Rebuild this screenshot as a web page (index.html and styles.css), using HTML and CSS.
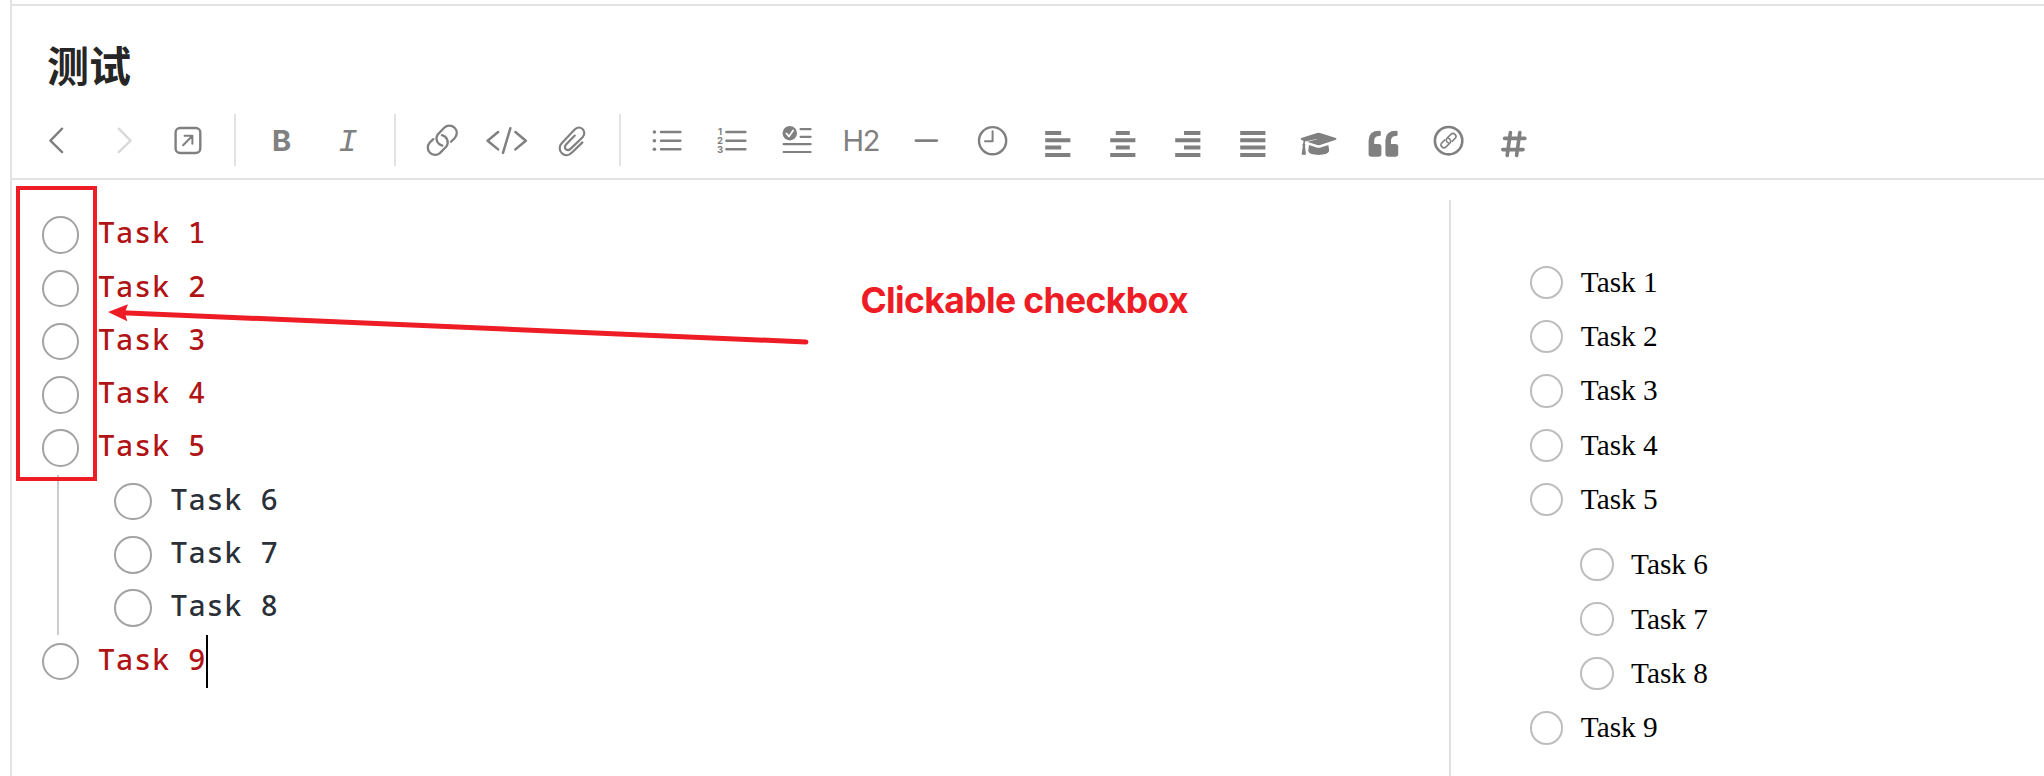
FILE: index.html
```html
<!DOCTYPE html>
<html lang="zh">
<head>
<meta charset="utf-8">
<title>测试</title>
<link rel="stylesheet" href="styles.css">
</head>
<body>
<main class="window">
  <header class="head">
    <h1 class="title">测试</h1>
    <nav class="toolbar">
      <svg class="tool" viewBox="-32.6 -26 65.2 52"><path d="M4.5-11.3-7.2.7 4.5 12.2"/></svg>
      <svg class="tool faint" viewBox="-32.6 -26 65.2 52"><path d="M-3.8-11.3 8 .7-3.8 12.2"/></svg>
      <svg class="tool" viewBox="-32.6 -26 65.2 52"><rect x="-12" y="-12" width="24.7" height="25" rx="4.5"/><path d="M-4.5 5.2 4.6-4M-3-4.3H4.8V3.7" stroke-width="2"/></svg>
      <span class="sep"></span>
      <svg class="tool text" viewBox="-32.6 -26 65.2 52"><text x="-9.6" y="11" class="bold">B</text></svg>
      <svg class="tool text" viewBox="-32.6 -26 65.2 52"><text x="-9.4" y="11" class="italic">I</text></svg>
      <span class="sep"></span>
      <svg class="tool" viewBox="-32.6 -26 65.2 52"><g stroke-width="2.3"><path d="M-8.3-.9-12 2.8A7.3 7.3 0 0 0-1.7 13.1L5 6.2A7.3 7.3 0 0 0 .3-4.8"/><path d="M9.4 1.8 13-1.8A7.3 7.3 0 0 0 2.6-12.2L-4-5.4A7.3 7.3 0 0 0 .8 5.6"/></g></svg>
      <svg class="tool" viewBox="-32.6 -26 65.2 52"><path stroke-width="2.5" d="M-8.5-8-19 .7-8.5 9.4M8.8-8 19.2.7 8.8 9.4M3.8-11.8-3.6 12.8"/></svg>
      <svg class="tool" viewBox="-32.6 -26 65.2 52"><path stroke-width="2.2" d="M10.8 2.4.7 12.3C-2.5 15.6-6.8 16-9.7 13.2S-12.7 6-9.7 2.9L3.1-10.4C5.5-12.9 8.7-13 10.9-11S13.5-5.4 11-2.8L-.8 8.6C-2.4 10.2-4.4 10.4-5.8 9.1S-6.9 6-5.3 4.3L3.2-4.4"/></svg>
      <span class="sep"></span>
      <svg class="tool" viewBox="-32.6 -26 65.2 52"><path stroke-width="2.4" d="M-5.6-8H13.8M-5.6.7H13.8M-5.6 9.3H13.8"/><g class="fill"><circle cx="-12.2" cy="-8" r="1.8"/><circle cx="-12.2" cy=".7" r="1.8"/><circle cx="-12.2" cy="9.3" r="1.8"/></g></svg>
      <svg class="tool text" viewBox="-32.6 -26 65.2 52"><path class="line" d="M-5.2-8H13.8M-5.2.7H13.8M-5.2 9.3H13.8"/><g class="nums"><text x="-11.6" y="-5">1</text><text x="-11.6" y="3.9">2</text><text x="-11.6" y="12.7">3</text></g></svg>
      <svg class="tool" viewBox="-32.6 -26 65.2 52"><circle class="fill" cx="-6.8" cy="-6.8" r="7.2"/><path stroke="#fff" stroke-width="1.8" d="M-10.2-6.5-7.6-3.6-3.5-9.6"/><path stroke-width="2.2" d="M4-10.8H14M4-3.2H14M-13 4.2H14M-13 12H14"/></svg>
      <svg class="tool text" viewBox="-32.6 -26 65.2 52"><text x="-19.2" y="11" class="heading" textLength="38">H2</text></svg>
      <svg class="tool" viewBox="-32.6 -26 65.2 52"><path stroke-width="2.8" d="M-10.6.6H10.2"/></svg>
      <svg class="tool" viewBox="-32.6 -26 65.2 52"><circle cx="0" cy=".7" r="13.6"/><path d="M0-8.8V1.2H-7.6" stroke-width="2"/></svg>
      <svg class="tool bars" viewBox="-32.6 -26 65.2 52"><path d="M-12.4-7H3.6M-12.4 .2H12.8M-12.4 7.6H3.6M-12.4 15H12.8"/></svg>
      <svg class="tool bars" viewBox="-32.6 -26 65.2 52"><path d="M-6.8-7H7.2M-12.4 .2H12.8M-6.8 7.6H7.2M-12.4 15H12.8"/></svg>
      <svg class="tool bars" viewBox="-32.6 -26 65.2 52"><path d="M-3.6-7H12.8M-12.4 .2H12.8M-3.6 7.6H12.8M-12.4 15H12.8"/></svg>
      <svg class="tool bars" viewBox="-32.6 -26 65.2 52"><path d="M-12.4-7H12.8M-12.4 .2H12.8M-12.4 7.6H12.8M-12.4 15H12.8"/></svg>
      <svg class="tool" viewBox="-32.6 -26 65.2 52"><g class="fill"><path d="M-17.3-2-1.5-7Q0-7.4 1.5-7L17.3-2Q18.8-1 17.3-.2L1.5 5Q0 5.5-1.5 5L-11.5 1.8-3-.3-.5-1.2-13.5 1.5Q-13.8 2.5-13.8 3.6-12.6 4.6-13.6 6L-12.6 14.7H-17L-15.8 6Q-16.8 4.8-15.5 3.5L-15 1-17.3-.2Q-18.8-1-17.3-2Z"/><path d="M-9.6 5-2 7.5Q0 8 2 7.5L9.8 5 10.6 11Q9 14.8 0 14.9-9.3 14.8-10.4 11Z"/></g></svg>
      <svg class="tool" viewBox="-32.6 -26 65.2 52"><g class="fill"><path id="quote" d="M-2.8-8V-5.2Q-2.8-4-4.2-4-9.4-4-9.4 .8V4H-5Q-2.2 4-2.2 6.8V14Q-2.2 16.8-5 16.8H-12.2Q-15 16.8-15 14V.8Q-15-9.2-4.4-9.2-2.8-9.2-2.8-8Z"/><use href="#quote" x="16.8"/></g></svg>
      <svg class="tool" viewBox="-32.6 -26 65.2 52"><circle cx="0" cy=".7" r="13.7" stroke-width="2.6"/><g transform="translate(-.3 .4) scale(.52)" stroke-width="3"><path d="M-6.6-1-12.2 4.4A5.6 5.6 0 0 0-4.2 12.4L3 5.2A5.6 5.6 0 0 0 .3-4"/><path d="M7.4 1.8 13-3.6A5.6 5.6 0 0 0 5-11.6L-2.4-4.4A5.6 5.6 0 0 0 .6 4.8"/></g></svg>
      <svg class="tool" viewBox="-32.6 -26 65.2 52"><path stroke-width="3.6" d="M-3.2-7.4-6.4 15.4M6.2-7.4 3 15.4M-9-1.6H11.3M-10.8 9.6H9.5"/></svg>
    </nav>
  </header>
  <div class="panes">
    <section class="editor">
      <ul class="source">
        <li class="row"><i class="box"></i><span class="code">Task 1</span></li>
        <li class="row"><i class="box"></i><span class="code">Task 2</span></li>
        <li class="row"><i class="box"></i><span class="code">Task 3</span></li>
        <li class="row"><i class="box"></i><span class="code">Task 4</span></li>
        <li class="row"><i class="box"></i><span class="code">Task 5</span></li>
        <li>
          <ul class="nested">
            <li class="row"><i class="box"></i><span class="code">Task 6</span></li>
            <li class="row"><i class="box"></i><span class="code">Task 7</span></li>
            <li class="row"><i class="box"></i><span class="code">Task 8</span></li>
          </ul>
        </li>
        <li class="row"><i class="box"></i><span class="code">Task 9</span><span class="caret"></span></li>
      </ul>
    </section>
    <section class="preview">
      <ul class="tasks">
        <li class="task"><i class="check"></i>Task 1</li>
        <li class="task"><i class="check"></i>Task 2</li>
        <li class="task"><i class="check"></i>Task 3</li>
        <li class="task"><i class="check"></i>Task 4</li>
        <li class="task"><i class="check"></i>Task 5</li>
        <li>
          <ul class="subtasks">
            <li class="task"><i class="check"></i>Task 6</li>
            <li class="task"><i class="check"></i>Task 7</li>
            <li class="task"><i class="check"></i>Task 8</li>
          </ul>
        </li>
        <li class="task"><i class="check"></i>Task 9</li>
      </ul>
    </section>
  </div>
</main>
<svg class="annotation" viewBox="0 0 2044 776">
  <rect x="18" y="188" width="77" height="291"/>
  <path class="shaft" d="M122 312.7 806 342"/>
  <path class="tip" d="M108 312 128 304.2 124.8 312.8 127.3 321.2Z"/>
  <text x="860.5" y="313" textLength="328">Clickable checkbox</text>
</svg>
</body>
</html>
```
FILE: styles.css
```css
* { box-sizing: border-box; }
body { margin: 0; background: #fff; overflow: hidden; }
ul { list-style: none; margin: 0; padding: 0; }

.window {
  height: 776px;
  margin-left: 10px;
  padding-top: 4px;
  border-left: 2px solid #e3e3e3;
  display: flex;
  flex-direction: column;
}
.head {
  height: 176px;
  flex: none;
  border-top: 2px solid #e3e3e3;
  border-bottom: 2px solid #e3e3e3;
}
.title {
  margin: 0;
  padding: 28px 0 0 35px;
  height: 108px;
  font: 700 42px/60px "Noto Sans CJK SC", sans-serif;
  color: #262626;
}
.toolbar { display: flex; height: 52px; padding-left: 12.6px; }
.tool {
  width: 65.2px;
  height: 52px;
  flex: none;
  fill: none;
  stroke: #808080;
  stroke-width: 2.4;
  stroke-linecap: round;
  stroke-linejoin: round;
}
.faint { stroke: #d9d9d9; }
.text { fill: #808080; stroke: none; }
.line { stroke: #808080; }
.fill { fill: #808080; stroke: none; }
.bars { stroke-width: 4; stroke-linecap: butt; }
.bold { font: 700 29px Inter, sans-serif; }
.italic { font: italic 400 32px "Liberation Mono", monospace; }
.heading { font: 400 29px Inter, sans-serif; }
.nums { font: 700 9.5px Inter, sans-serif; text-anchor: middle; }
.sep { width: 2px; height: 52px; flex: none; margin: 0 13px 0 14.2px; background: #e3e3e3; }

.panes { flex: 1; display: flex; }
.editor { width: 1437px; flex: none; padding: 28.4px 0 0 30px; }
.row {
  display: flex;
  align-items: center;
  height: 53.3px;
  font: 500 29px "Noto Sans Mono", "DejaVu Sans Mono", monospace;
  letter-spacing: .65px;
  color: #b01414;
  white-space: pre;
}
.code { padding-bottom: 6.6px; }
.box {
  width: 37.5px;
  height: 37.5px;
  margin: 0 18.6px 0 -.3px;
  border: 2px solid #a3a3a3;
  border-radius: 50%;
}
.nested { margin-left: 15px; border-left: 2px solid #ccc; padding-left: 55.4px; }
.nested .row { color: #2b3038; }
.caret { width: 2px; height: 53px; background: #000; }

.preview {
  flex: 1;
  margin-top: 20px;
  padding: 55px 0 0 79px;
  border-left: 2px solid #e0e0e0;
}
.task {
  display: flex;
  align-items: center;
  height: 54.4px;
  font: 400 29.3px "Liberation Serif", serif;
  color: #000;
}
.check {
  width: 33.4px;
  height: 33.4px;
  margin-right: 17.4px;
  border: 2px solid #bdbdbd;
  border-radius: 50%;
}
.subtasks { padding: 10.6px 0 0 50.3px; }

.annotation {
  position: absolute;
  left: 0;
  top: 0;
  width: 2044px;
  height: 776px;
  pointer-events: none;
  fill: none;
  stroke: #ee1c25;
}
.annotation rect { stroke-width: 4; }
.annotation .shaft { stroke-width: 5; stroke-linecap: round; }
.annotation .tip { fill: #ee1c25; stroke: none; }
.annotation text { fill: #ee1c25; stroke: none; font: 650 35.5px Inter, sans-serif; }
```
